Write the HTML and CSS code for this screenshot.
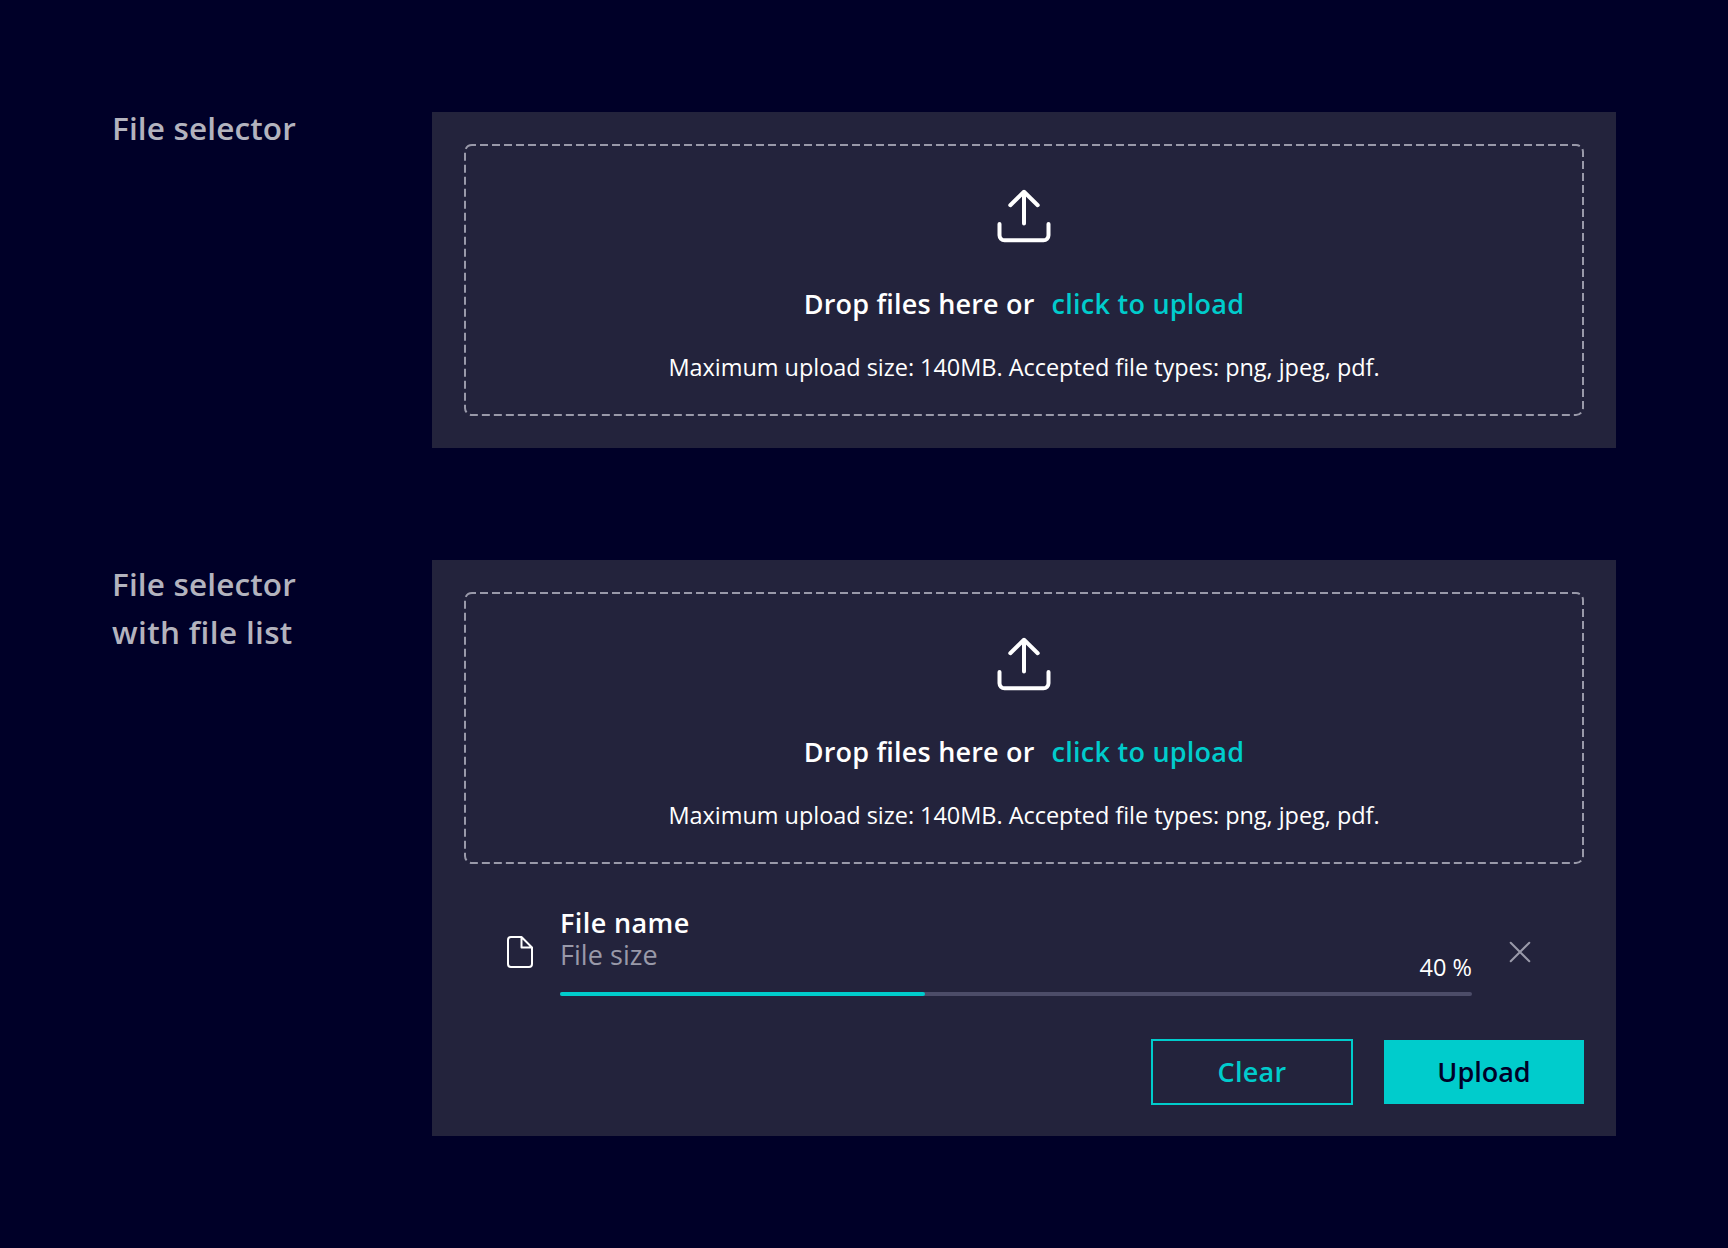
FILE: index.html
```html
<!DOCTYPE html>
<html lang="en">
<head>
<meta charset="utf-8">
<title>File selector</title>
<link rel="stylesheet" href="styles.css">
</head>
<body>
<main class="page">
  <section class="example">
    <h2 class="label label-single">File selector</h2>
    <div class="panel">
      <div class="dropzone">
        <svg class="outline" viewBox="0 0 1120 272" aria-hidden="true"><rect x="1" y="1" width="1118" height="270" rx="7"/></svg>
        <svg class="upload-icon" viewBox="0 0 64 64" aria-hidden="true"><path d="M32 39.500V8M18.300 21.200L32 7.800l13.700 13.400M7.500 40v11.300a5 5 0 0 0 5 5h39a5 5 0 0 0 5-5V40"/></svg>
        <p class="prompt"><span class="drop">Drop files here or</span><a class="link">click to upload</a></p>
        <p class="hint">Maximum upload size: 140MB. Accepted file types: png, jpeg, pdf.</p>
      </div>
    </div>
  </section>
  <section class="example">
    <h2 class="label">File selector<br><span class="second">with file list</span></h2>
    <div class="panel panel-list">
      <div class="dropzone">
        <svg class="outline" viewBox="0 0 1120 272" aria-hidden="true"><rect x="1" y="1" width="1118" height="270" rx="7"/></svg>
        <svg class="upload-icon" viewBox="0 0 64 64" aria-hidden="true"><path d="M32 39.500V8M18.300 21.200L32 7.800l13.700 13.400M7.500 40v11.300a5 5 0 0 0 5 5h39a5 5 0 0 0 5-5V40"/></svg>
        <p class="prompt"><span class="drop">Drop files here or</span><a class="link">click to upload</a></p>
        <p class="hint">Maximum upload size: 140MB. Accepted file types: png, jpeg, pdf.</p>
      </div>
      <div class="file">
        <svg class="file-icon" viewBox="0 0 28 34" aria-hidden="true"><path d="M5 2h10.500L26 12.500V29a3 3 0 0 1-3 3H5a3 3 0 0 1-3-3V5a3 3 0 0 1 3-3M15.500 2v10.500H26"/></svg>
        <div class="details">
          <div class="meta">
            <div><p class="name">File name</p><p class="size">File size</p></div>
            <p class="percent">40 %</p>
          </div>
          <div class="track"><div class="bar" style="width:40%"></div></div>
        </div>
        <svg class="remove" viewBox="0 0 22 22" aria-hidden="true"><path d="M1.700 1.700l18.600 18.600M20.300 1.700L1.700 20.300"/></svg>
      </div>
      <div class="actions">
        <button class="button clear">Clear</button>
        <button class="button upload">Upload</button>
      </div>
    </div>
  </section>
</main>
</body>
</html>
```
FILE: styles.css
```css
* { box-sizing: border-box; }
body { margin: 0; background: #000028; color: #fff; font-family: "Open Sans", "Noto Sans", sans-serif; }
p, h2 { margin: 0; }
svg { display: block; fill: none; stroke-linecap: round; stroke-linejoin: round; }
.page { display: flex; flex-direction: column; gap: 112px; height: 1248px; padding: 112px; }
.example { display: grid; grid-template-columns: 320px 1184px; align-items: start; }
.label { color: #b3b3be; font-size: 31.5px; line-height: 48px; font-weight: 600; letter-spacing: 0.15px; white-space: nowrap; }
.label-single { margin-top: -8px; }
.second { letter-spacing: 0.35px; }
.panel { background: #23233c; padding: 32px; }
.panel-list { padding-bottom: 31px; }
.dropzone { position: relative; display: flex; flex-direction: column; align-items: center; height: 272px; padding-top: 40px; }
.outline { position: absolute; inset: 0; width: 100%; height: 100%; stroke: #9999a9; stroke-width: 2; stroke-dasharray: 8 4; stroke-dashoffset: 4; stroke-linecap: butt; }
.upload-icon { width: 64px; height: 64px; stroke: #fff; stroke-width: 4; }
.prompt { display: flex; gap: 17px; margin-top: 38px; font-size: 27px; line-height: 36px; font-weight: 600; white-space: nowrap; letter-spacing: 0.2px; }
.link { color: #00cccc; letter-spacing: 0.25px; }
.hint { margin-top: 29px; font-size: 23.5px; line-height: 32px; letter-spacing: -0.04px; white-space: nowrap; }
.file { display: flex; align-items: center; margin-top: 43px; padding: 0 53px 0 42px; }
.file-icon { width: 28px; height: 34px; margin-top: 1px; stroke: #fff; stroke-width: 2; }
.details { width: 912px; margin-left: 26px; }
.meta { display: flex; justify-content: space-between; align-items: flex-end; height: 77px; }
.meta > div { align-self: flex-start; }
.name, .size { font-size: 27px; line-height: 32px; }
.name { font-weight: 600; letter-spacing: 0.4px; }
.size { color: #9999a9; letter-spacing: 0.05px; }
.percent { padding-bottom: 1px; font-size: 23.5px; line-height: 32px; }
.track { height: 4px; margin-top: 8px; border-radius: 2px; background: #4c4c68; }
.bar { height: 4px; border-radius: 2px; background: #00cccc; }
.remove { width: 22px; height: 22px; margin: 1px 0 0 37px; stroke: #9999a9; stroke-width: 2; }
.actions { display: flex; justify-content: flex-end; align-items: center; gap: 31px; margin-top: 43px; }
.button { width: 200px; height: 64px; padding: 0; border: 0; font: inherit; font-size: 27px; line-height: 36px; font-weight: 600; }
.clear { width: 202px; height: 66px; border: 2px solid #00cccc; background: transparent; color: #00cccc; letter-spacing: 0.3px; }
.upload { background: #00cccc; color: #000028; letter-spacing: 0; }
```
